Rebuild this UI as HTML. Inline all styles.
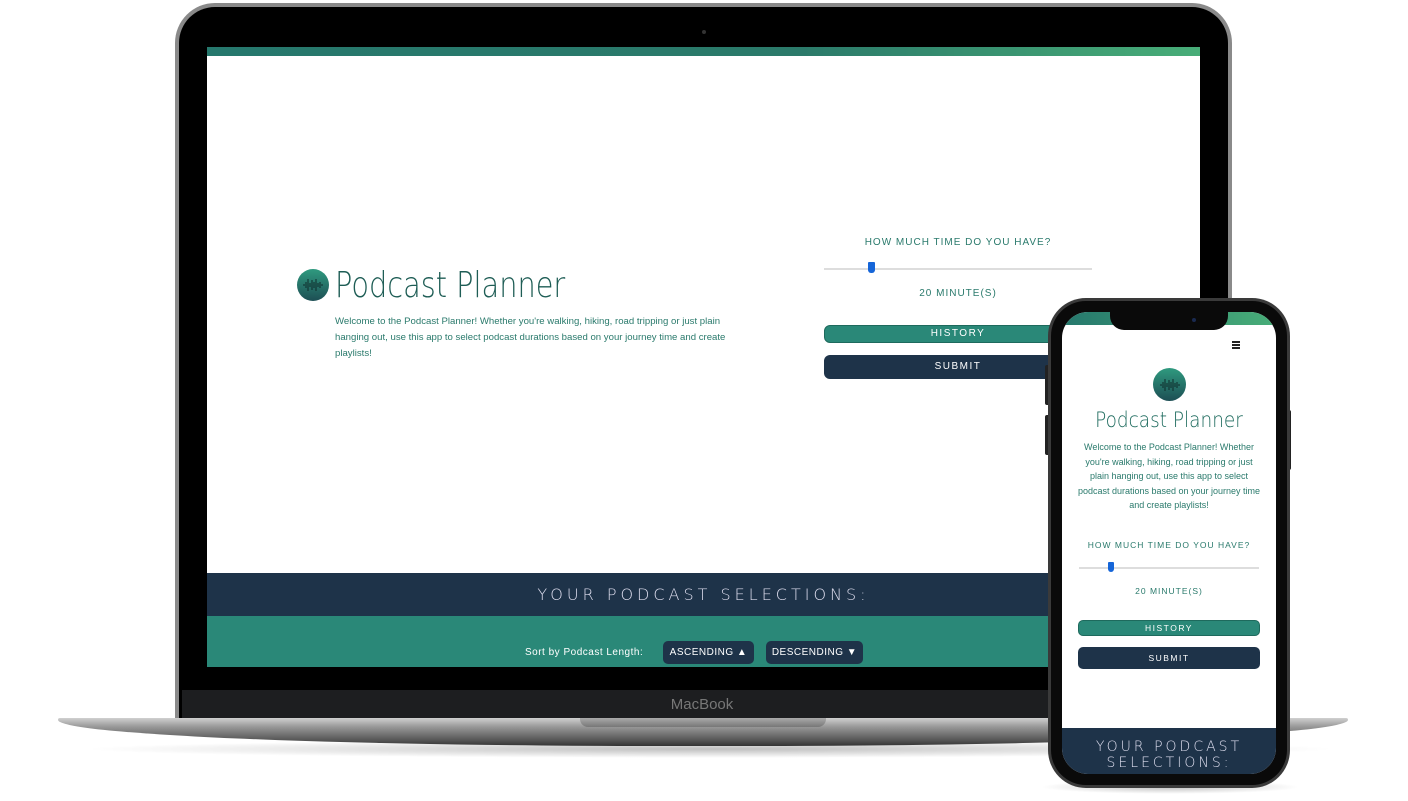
<!DOCTYPE html>
<html><head><meta charset="utf-8"><style>
*{margin:0;padding:0;box-sizing:border-box}
body{width:1408px;height:801px;background:#fff;position:relative;overflow:hidden;font-family:"Liberation Sans",sans-serif}
.a{position:absolute}
.c{text-align:center}
.logo{border-radius:50%;background:linear-gradient(#2f9a7f,#1d4e54);display:flex;align-items:center;justify-content:center}
.t{font-family:"DejaVu Sans","Liberation Sans",sans-serif;font-weight:200}
</style></head><body>
<div class="a" style="left:80px;top:740px;width:1260px;height:18px;border-radius:50%;background:radial-gradient(ellipse,rgba(0,0,0,.25),rgba(0,0,0,0) 70%)"></div>
<div class="a" style="left:175px;top:3px;width:1057px;height:720px;border-radius:40px 40px 0 0;background:#8a8a8a"></div>
<div class="a" style="left:179px;top:7px;width:1049px;height:716px;border-radius:36px 36px 0 0;background:#000"></div>
<div class="a" style="left:702px;top:30px;width:4px;height:4px;border-radius:50%;background:#333"></div>
<div class="a" style="left:182px;top:690px;width:1043px;height:30px;background:#1d1e20"></div>
<div class="a c" style="left:600px;top:696px;width:204px;color:#777;font-size:15px">MacBook</div>
<div class="a" style="left:58px;top:718px;width:1290px;height:28px;border-radius:2px 2px 50% 50%/2px 2px 100% 100%;background:linear-gradient(#d0d0d0,#9a9a9a 30%,#555 80%,#333)"></div>
<div class="a" style="left:580px;top:718px;width:246px;height:9px;border-radius:0 0 8px 8px;background:linear-gradient(#aaa,#777)"></div>
<div class="a" style="left:207px;top:47px;width:993px;height:620px;background:#fff;overflow:hidden">
 <div class="a" style="left:0;top:0;width:993px;height:9px;background:linear-gradient(90deg,#26786d,#2b7a6a 60%,#48ad78)"></div>
 <div class="a logo" style="left:90px;top:222px;width:32px;height:32px"><svg width="22" height="14" viewBox="0 0 22 14" stroke="#0d2b2a" stroke-width="1"><path d="M2 6v2M4 4v6M6 1v12M8 5v4M10 2v10M12 4v6M14 1v12M16 5v4M18 4v6M20 6v2"/></svg></div>
 <div class="a t" style="left:128px;top:218px;font-size:36px;color:#1e5d55;transform:scaleX(.8);transform-origin:0 0;white-space:nowrap">Podcast Planner</div>
 <div class="a" style="left:128px;top:267px;width:400px;font-size:9.6px;line-height:16px;color:#2a7a6c">Welcome to the Podcast Planner! Whether you're walking, hiking, road tripping or just plain hanging out, use this app to select podcast durations based on your journey time and create playlists!</div>
 <div class="a c" style="left:617px;top:190px;width:268px;font-size:10px;letter-spacing:1px;color:#2a7a6c">HOW MUCH TIME DO YOU HAVE?</div>
 <div class="a" style="left:617px;top:221px;width:268px;height:2px;background:#ddd"></div>
 <div class="a" style="left:661px;top:215px;width:7px;height:11px;background:#1565d8;border-radius:1px 1px 3px 3px"></div>
 <div class="a c" style="left:617px;top:241px;width:268px;font-size:10px;letter-spacing:1px;color:#2a7a6c">20 MINUTE(S)</div>
 <div class="a c" style="left:617px;top:278px;width:268px;height:18px;border-radius:6px;background:#2a8878;border:1px solid #1e6a5d;color:#fff;font-size:10px;line-height:16px;letter-spacing:1.5px">HISTORY</div>
 <div class="a c" style="left:617px;top:308px;width:268px;height:24px;border-radius:6px;background:#1e3349;color:#fff;font-size:10px;line-height:24px;letter-spacing:1.5px">SUBMIT</div>
 <div class="a c t" style="left:0;top:526px;width:993px;height:43px;background:#1e3349;color:#dde;font-size:16px;line-height:43px;letter-spacing:4px">YOUR PODCAST SELECTIONS:</div>
 <div class="a" style="left:0;top:569px;width:993px;height:51px;background:#2a8878"></div>
 <div class="a" style="left:318px;top:600px;font-size:10px;color:#fff;letter-spacing:.5px">Sort by Podcast Length:</div>
 <div class="a c" style="left:456px;top:594px;width:91px;height:23px;border-radius:5px;background:#1e3349;color:#fff;font-size:10px;line-height:23px;letter-spacing:.5px">ASCENDING ▲</div>
 <div class="a c" style="left:559px;top:594px;width:97px;height:23px;border-radius:5px;background:#1e3349;color:#fff;font-size:10px;line-height:23px;letter-spacing:.5px">DESCENDING ▼</div>
</div>
<div class="a" style="left:1040px;top:780px;width:260px;height:14px;border-radius:50%;background:radial-gradient(ellipse,rgba(0,0,0,.25),rgba(0,0,0,0) 70%)"></div>
<div class="a" style="left:1045px;top:365px;width:5px;height:40px;background:#222;border-radius:2px"></div>
<div class="a" style="left:1045px;top:415px;width:5px;height:40px;background:#222;border-radius:2px"></div>
<div class="a" style="left:1287px;top:410px;width:4px;height:60px;background:#222;border-radius:2px"></div>
<div class="a" style="left:1048px;top:298px;width:242px;height:490px;border-radius:38px;background:#3a3a3a"></div>
<div class="a" style="left:1051px;top:301px;width:236px;height:484px;border-radius:35px;background:#0a0a0a"></div>
<div class="a" style="left:1062px;top:312px;width:214px;height:462px;border-radius:26px;background:#fff;overflow:hidden">
 <div class="a" style="left:0;top:0;width:214px;height:13px;background:linear-gradient(90deg,#26786d,#48ad78)"></div>
 <div class="a" style="left:170px;top:29px;width:8px;height:1.5px;background:#222;box-shadow:0 3px 0 #222,0 6px 0 #222"></div>
 <div class="a logo" style="left:91px;top:56px;width:33px;height:33px"><svg width="22" height="14" viewBox="0 0 22 14" stroke="#0d2b2a" stroke-width="1"><path d="M2 6v2M4 4v6M6 1v12M8 5v4M10 2v10M12 4v6M14 1v12M16 5v4M18 4v6M20 6v2"/></svg></div>
 <div class="a c t" style="left:0;top:96px;width:214px;font-size:21px;color:#1e6b5e;transform:scaleX(.88);white-space:nowrap">Podcast Planner</div>
 <div class="a c" style="left:14px;top:128px;width:186px;font-size:9px;line-height:14.5px;color:#2a7a6c">Welcome to the Podcast Planner! Whether you're walking, hiking, road tripping or just plain hanging out, use this app to select podcast durations based on your journey time and create playlists!</div>
 <div class="a c" style="left:0;top:228px;width:214px;font-size:8.5px;letter-spacing:1px;color:#2a7a6c">HOW MUCH TIME DO YOU HAVE?</div>
 <div class="a" style="left:17px;top:255px;width:180px;height:2px;background:#ddd"></div>
 <div class="a" style="left:46px;top:250px;width:6px;height:10px;background:#1565d8;border-radius:1px 1px 3px 3px"></div>
 <div class="a c" style="left:0;top:274px;width:214px;font-size:8.5px;letter-spacing:1px;color:#2a7a6c">20 MINUTE(S)</div>
 <div class="a c" style="left:16px;top:308px;width:182px;height:16px;border-radius:5px;background:#2a8878;border:1px solid #1e6a5d;color:#fff;font-size:8.5px;line-height:14px;letter-spacing:1.5px">HISTORY</div>
 <div class="a c" style="left:16px;top:335px;width:182px;height:22px;border-radius:5px;background:#1e3349;color:#fff;font-size:8.5px;line-height:22px;letter-spacing:1.5px">SUBMIT</div>
 <div class="a c t" style="left:0;top:416px;width:214px;height:46px;background:#1e3349;color:#dde;font-size:14px;line-height:16px;letter-spacing:3px;padding-top:11px">YOUR PODCAST SELECTIONS:</div>
</div>
<div class="a" style="left:1110px;top:310px;width:118px;height:20px;border-radius:0 0 14px 14px;background:#0a0a0a"></div>
<div class="a" style="left:1192px;top:318px;width:4px;height:4px;border-radius:50%;background:#1a2a50"></div>
</body></html>
